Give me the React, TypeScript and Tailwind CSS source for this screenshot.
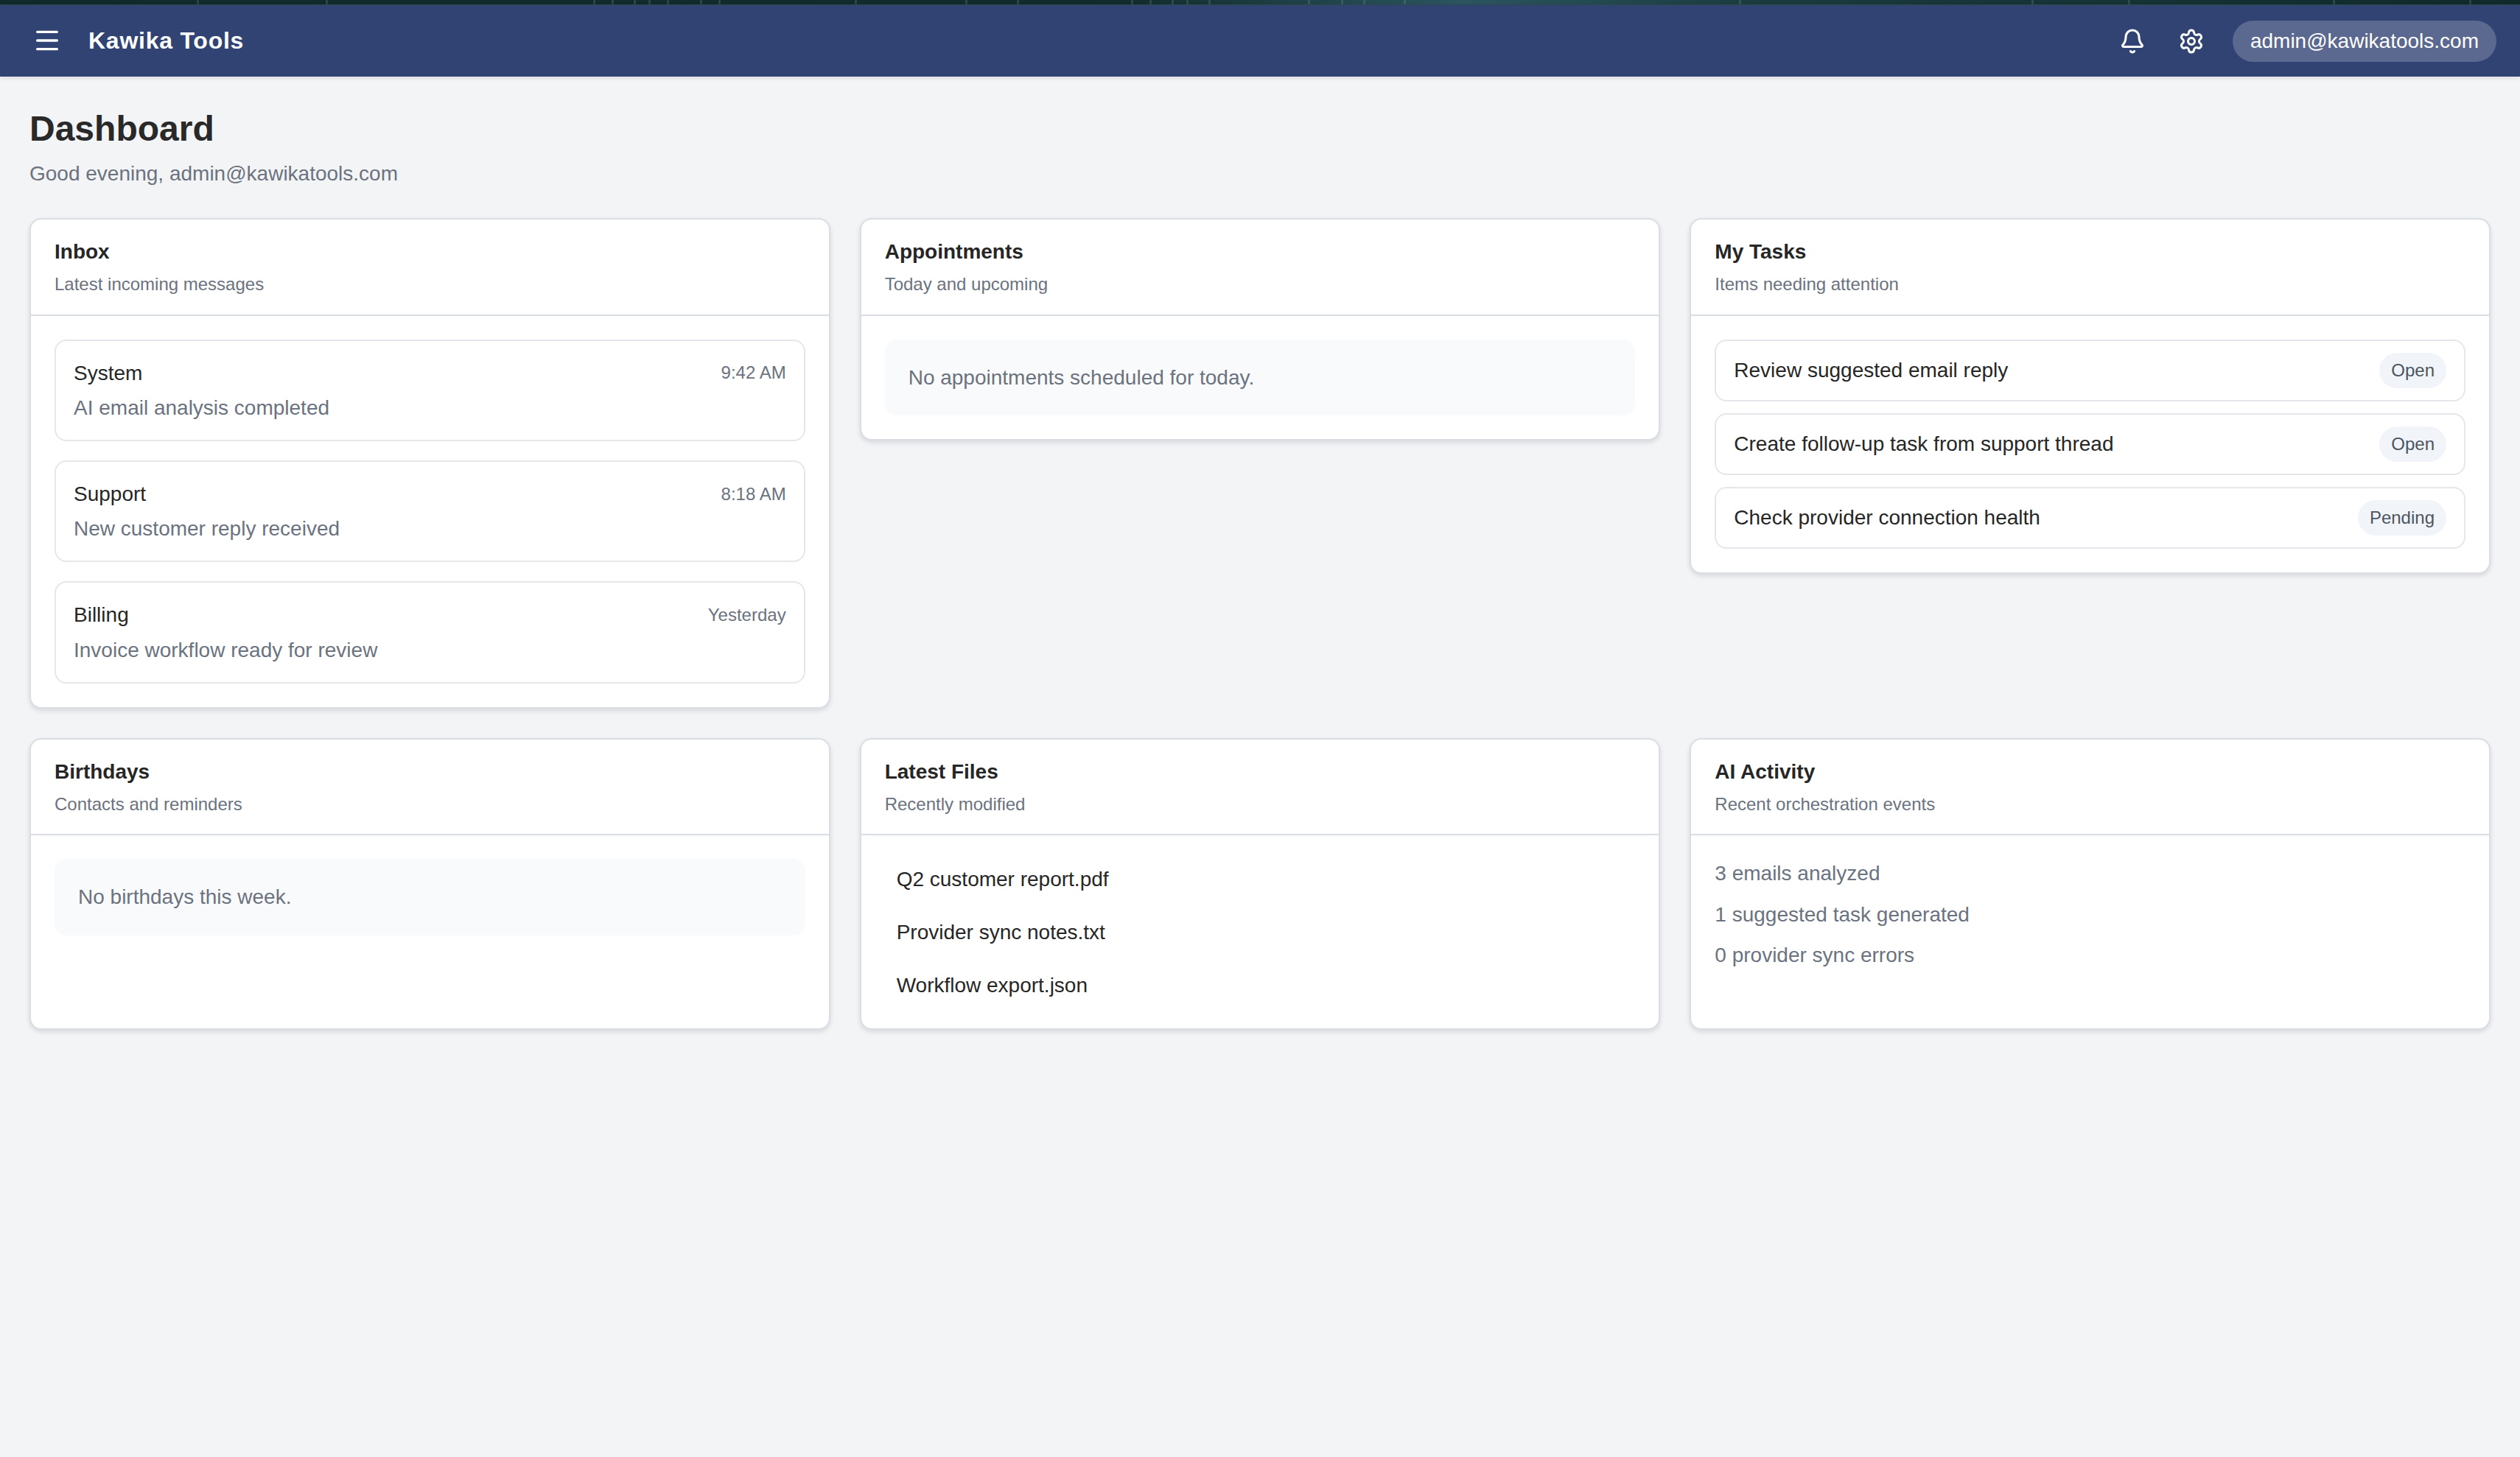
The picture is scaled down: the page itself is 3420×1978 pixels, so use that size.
import { Bell, Menu, Settings } from 'lucide-react';
import type { ReactNode } from 'react';

const inbox = [
  { from: 'System', time: '9:42 AM', text: 'AI email analysis completed' },
  { from: 'Support', time: '8:18 AM', text: 'New customer reply received' },
  { from: 'Billing', time: 'Yesterday', text: 'Invoice workflow ready for review' },
];

const tasks = [
  { title: 'Review suggested email reply', status: 'Open' },
  { title: 'Create follow-up task from support thread', status: 'Open' },
  { title: 'Check provider connection health', status: 'Pending' },
];

const files = ['Q2 customer report.pdf', 'Provider sync notes.txt', 'Workflow export.json'];

const activity = ['3 emails analyzed', '1 suggested task generated', '0 provider sync errors'];

// light flecks in the wallpaper strip, x position in page pixels
const flecks = [267, 442, 805, 830, 860, 880, 905, 950, 975, 1160, 1310, 1380, 1535, 1560, 1590, 1610, 1640, 1775, 1820, 1850, 1905, 2360, 2757, 2888, 3166, 3351];

const Card = ({
  title,
  subtitle,
  className = '',
  children,
}: {
  title: string;
  subtitle: string;
  className?: string;
  children: ReactNode;
}) => (
  <section className={`bg-white border-2 border-[#dadde3] rounded-2xl shadow-[0_3px_6px_rgba(17,24,39,0.12)] overflow-hidden ${className}`}>
    <div className="px-8 py-6 border-b-2 border-[#dadde3]">
      <h2 className="text-[28px] font-bold text-[#262626]">{title}</h2>
      <p className="mt-2 text-[24px] text-[#6b7280]">{subtitle}</p>
    </div>
    {children}
  </section>
);

const EmptyState = ({ text }: { text: string }) => (
  <div className="p-8">
    <div className="p-8 rounded-2xl bg-[#f9fafb] text-[28px] text-[#6b7280]">{text}</div>
  </div>
);

export default function App() {
  return (
    <div className="min-h-screen bg-[#f3f4f6] font-['Liberation_Sans',Arial,sans-serif] leading-[1.4]">
      {/* wallpaper peeking above the app bar */}
      <div className="h-[7px] border-b border-[#2f4a4a] bg-[linear-gradient(90deg,#10292b_0%,#122c2d_45%,#2b5560_58%,#1a3a3e_70%,#10292b_100%)]">
        <svg className="block w-full h-full" viewBox="0 0 3420 6" preserveAspectRatio="none">
          {flecks.map((x) => (
            <rect key={x} x={x} y="0" width="3" height="6" fill="#8fa9a8" opacity="0.2" />
          ))}
        </svg>
      </div>

      <header className="h-[97px] flex items-center justify-between pl-[44px] pr-8 bg-[#314373] shadow-[0_2px_6px_rgba(0,0,0,0.10)]">
        <div className="flex items-center gap-9">
          <Menu className="w-10 h-10 text-white" strokeWidth={2} />
          <span className="text-[32px] tracking-[0.75px] font-bold text-white">Kawika Tools</span>
        </div>
        <div className="flex items-center">
          <Bell className="w-9 h-9 text-white mr-[44px]" strokeWidth={2} />
          <Settings className="w-9 h-9 text-white mr-[38px]" strokeWidth={2} />
          <div className="h-14 px-6 flex items-center rounded-full bg-[#5b6990] text-[28px] text-white">admin@kawikatools.com</div>
        </div>
      </header>

      <main className="pt-[42px] px-10">
        <h1 className="text-[48px] leading-[1.2] font-bold text-[#292929]">Dashboard</h1>
        <p className="mt-3 mb-[41px] text-[28px] text-[#6b7280]">Good evening, admin@kawikatools.com</p>

        <div className="grid grid-cols-3 gap-10">
          <Card title="Inbox" subtitle="Latest incoming messages">
            <div className="p-8 flex flex-col gap-[26px]">
              {inbox.map((m) => (
                <div key={m.from} className="px-6 py-6 border-2 border-[#e5e7eb] rounded-2xl">
                  <div className="flex items-center justify-between">
                    <span className="text-[28px] text-[#262626]">{m.from}</span>
                    <span className="text-[24px] text-[#6b7280]">{m.time}</span>
                  </div>
                  <p className="mt-2 text-[28px] text-[#6b7280]">{m.text}</p>
                </div>
              ))}
            </div>
          </Card>

          <Card title="Appointments" subtitle="Today and upcoming" className="self-start">
            <EmptyState text="No appointments scheduled for today." />
          </Card>

          <Card title="My Tasks" subtitle="Items needing attention" className="self-start">
            <div className="p-8 flex flex-col gap-4">
              {tasks.map((t) => (
                <div key={t.title} className="flex items-center justify-between px-6 py-4 border-2 border-[#e5e7eb] rounded-2xl">
                  <span className="text-[28px] text-[#262626]">{t.title}</span>
                  <span className="h-12 px-4 flex items-center rounded-full bg-[#f1f4f9] text-[24px] text-[#4b5563]">{t.status}</span>
                </div>
              ))}
            </div>
          </Card>

          <Card title="Birthdays" subtitle="Contacts and reminders">
            <EmptyState text="No birthdays this week." />
          </Card>

          <Card title="Latest Files" subtitle="Recently modified">
            <ul className="px-8 py-[23px]">
              {files.map((f) => (
                <li key={f} className="h-[72px] px-4 flex items-center text-[28px] text-[#262626]">{f}</li>
              ))}
            </ul>
          </Card>

          <Card title="AI Activity" subtitle="Recent orchestration events">
            <div className="p-8 flex flex-col gap-4">
              {activity.map((a) => (
                <p key={a} className="text-[28px] text-[#6b7280]">{a}</p>
              ))}
            </div>
          </Card>
        </div>
      </main>
    </div>
  );
}
